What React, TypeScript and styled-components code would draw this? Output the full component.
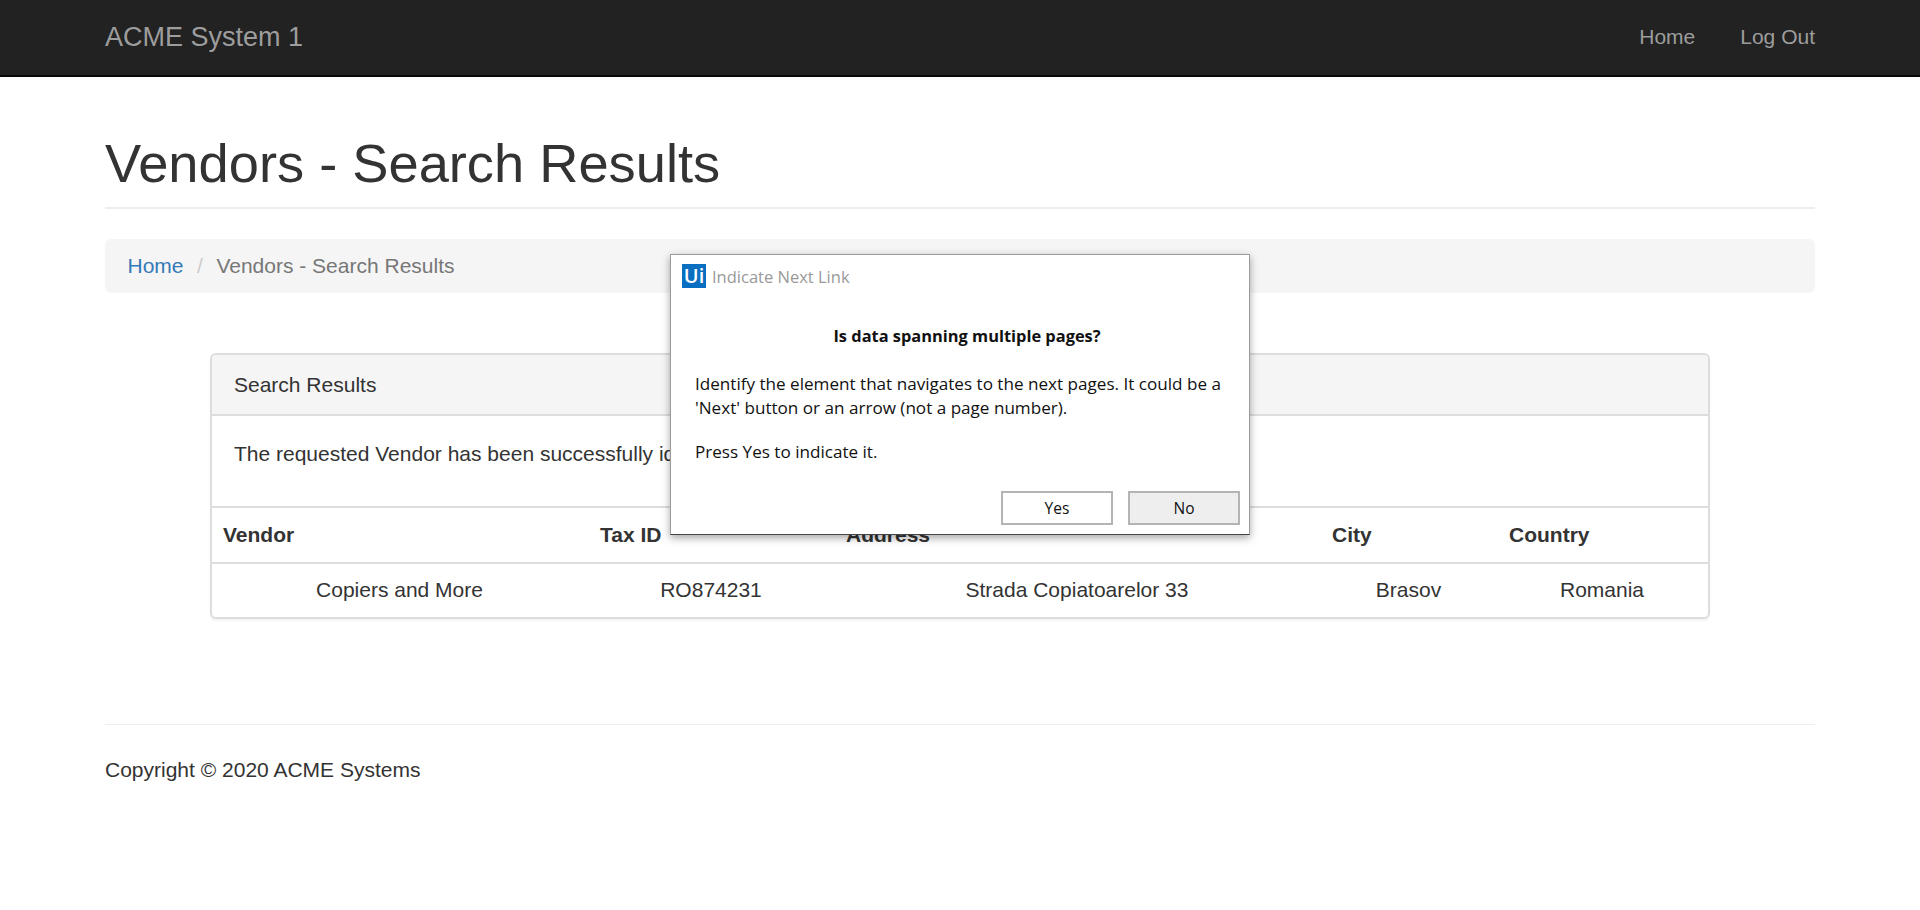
import React from 'react';
import styled, {createGlobalStyle} from 'styled-components';

const GlobalStyle = createGlobalStyle`
  html, body {
    margin: 0;
    padding: 0;
    background: #fff;
  }
  body {
    font-family: "Liberation Sans", Arial, sans-serif;
    font-size: 21px;
    line-height: 30px;
    color: #333;
  }
  * {
    box-sizing: border-box;
  }
`;

const Page = styled.div`
  position: relative;
  min-height: 910px;
  overflow: hidden;
`;

// Top navigation
const Navbar = styled.nav`
  height: 77px;
  background: #222;
  border-bottom: 2px solid #080808;
`;

const Container = styled.div`
  width: 1710px;
  margin: 0 auto;
`;

const NavInner = styled(Container)`
  height: 75px;
  padding-bottom: 2px;
  display: flex;
  align-items: center;
  justify-content: space-between;
`;

const Brand = styled.a`
  font-size: 27px;
  color: #9d9d9d;
`;

const NavLinks = styled.div`
  display: flex;
  gap: 45px;
`;

const NavLink = styled.a`
  font-size: 21px;
  color: #9d9d9d;
`;

// Page heading
const PageHeader = styled.div`
  margin-top: 56px;
  padding-bottom: 14px;
  border-bottom: 2px solid #eee;
`;

const Title = styled.h1`
  margin: 0;
  font-size: 54.25px;
  font-weight: 500;
  line-height: 60px;
  color: #333;
`;

const Breadcrumb = styled.div`
  margin-top: 30px;
  height: 54px;
  padding: 0 22.5px;
  display: flex;
  align-items: center;
  background: #f5f5f5;
  border-radius: 6px;
`;

const Crumb = styled.a`
  color: #337ab7;
`;

const CrumbDivider = styled.span`
  padding: 0 13.5px;
  color: #ccc;
`;

const CrumbActive = styled.span`
  color: #777;
`;

// Results panel
const Panel = styled.section`
  width: 1500px;
  margin: 60px auto 0;
  border: 2px solid #ddd;
  border-radius: 6px;
  box-shadow: 0 2px 2px rgba(0, 0, 0, 0.05);
  overflow: hidden;
`;

const PanelHeading = styled.div`
  height: 61px;
  padding: 0 22px;
  display: flex;
  align-items: center;
  background: #f5f5f5;
  border-bottom: 2px solid #ddd;
`;

const PanelBody = styled.div`
  height: 90px;
  padding: 23px 22px 0;
`;

const Table = styled.table`
  width: 100%;
  table-layout: fixed;
  border-collapse: collapse;
`;

const HeadCell = styled.th`
  height: 56px;
  padding: 0 11px;
  text-align: left;
  font-weight: 700;
  border-top: 2px solid #ddd;
  border-bottom: 2px solid #ddd;
`;

const Cell = styled.td`
  height: 54px;
  padding: 0 13px 1px 11px;
  text-align: center;
`;

// Footer
const Footer = styled.footer`
  margin-top: 105px;
  padding-top: 30px;
  border-top: 1px solid #eee;
`;

// UiPath dialog laid over the page
const Dialog = styled.div`
  position: absolute;
  left: 670px;
  top: 254px;
  width: 580px;
  height: 281px;
  background: #fff;
  border: 1px solid #9b9b9b;
  border-bottom-color: #444;
  box-shadow: 0 3px 8px rgba(0, 0, 0, 0.35);
  font-family: "Open Sans", sans-serif;
  color: #111;
`;

const DialogTitleBar = styled.div`
  height: 24px;
  margin-top: 9px;
  padding-left: 11px;
  display: flex;
  align-items: center;
  gap: 6px;
`;

const UiLogo = styled.div`
  width: 24px;
  height: 24px;
  background: #0a6fc0;
  color: #fff;
  font-size: 20px;
  font-weight: 600;
  line-height: 24px;
  text-align: center;
`;

const DialogTitle = styled.span`
  padding-top: 2px;
  font-size: 16.5px;
  line-height: 24px;
  color: #999;
`;

const Question = styled.div`
  margin-top: 36px;
  padding-left: 14px;
  font-size: 16.4px;
  font-weight: 700;
  line-height: 24px;
  text-align: center;
`;

const Message = styled.div`
  margin-top: 24px;
  padding: 0 10px 0 24px;
  font-size: 17.1px;
  line-height: 24px;
  white-space: nowrap;
`;

const MessageGap = styled.div`
  height: 20px;
`;

const DialogButtons = styled.div`
  position: absolute;
  right: 9px;
  bottom: 9px;
  display: flex;
  gap: 15px;
`;

const DialogButton = styled.button<{$active?: boolean}>`
  width: 112px;
  height: 34px;
  padding: 0;
  background: ${p => (p.$active ? '#eee' : '#fff')};
  border: 2px solid #b4b4b4;
  border-radius: 0;
  font-family: "Open Sans", sans-serif;
  font-size: 15.5px;
  color: #111;
`;

const columns = [377, 246, 486, 177, 210];
const headers = ['Vendor', 'Tax ID', 'Address', 'City', 'Country'];
const row = ['Copiers and More', 'RO874231', 'Strada Copiatoarelor 33', 'Brasov', 'Romania'];

function App() {
    return (
        <Page>
            <GlobalStyle/>
            <Navbar>
                <NavInner>
                    <Brand>ACME System 1</Brand>
                    <NavLinks>
                        <NavLink>Home</NavLink>
                        <NavLink>Log Out</NavLink>
                    </NavLinks>
                </NavInner>
            </Navbar>

            <Container>
                <PageHeader>
                    <Title>Vendors - Search Results</Title>
                </PageHeader>
                <Breadcrumb>
                    <Crumb>Home</Crumb>
                    <CrumbDivider>/</CrumbDivider>
                    <CrumbActive>Vendors - Search Results</CrumbActive>
                </Breadcrumb>

                <Panel>
                    <PanelHeading>Search Results</PanelHeading>
                    <PanelBody>The requested Vendor has been successfully identified.</PanelBody>
                    <Table>
                        <colgroup>
                            {columns.map(w => <col key={w} width={w}/>)}
                        </colgroup>
                        <thead>
                            <tr>
                                {headers.map(h => <HeadCell key={h}>{h}</HeadCell>)}
                            </tr>
                        </thead>
                        <tbody>
                            <tr>
                                {row.map(c => <Cell key={c}>{c}</Cell>)}
                            </tr>
                        </tbody>
                    </Table>
                </Panel>

                <Footer>Copyright © 2020 ACME Systems</Footer>
            </Container>

            <Dialog>
                <DialogTitleBar>
                    <UiLogo>Ui</UiLogo>
                    <DialogTitle>Indicate Next Link</DialogTitle>
                </DialogTitleBar>
                <Question>Is data spanning multiple pages?</Question>
                <Message>
                    Identify the element that navigates to the next pages. It could be a<br/>
                    'Next' button or an arrow (not a page number).
                    <MessageGap/>
                    Press Yes to indicate it.
                </Message>
                <DialogButtons>
                    <DialogButton>Yes</DialogButton>
                    <DialogButton $active>No</DialogButton>
                </DialogButtons>
            </Dialog>
        </Page>
    );
}

export default App;
